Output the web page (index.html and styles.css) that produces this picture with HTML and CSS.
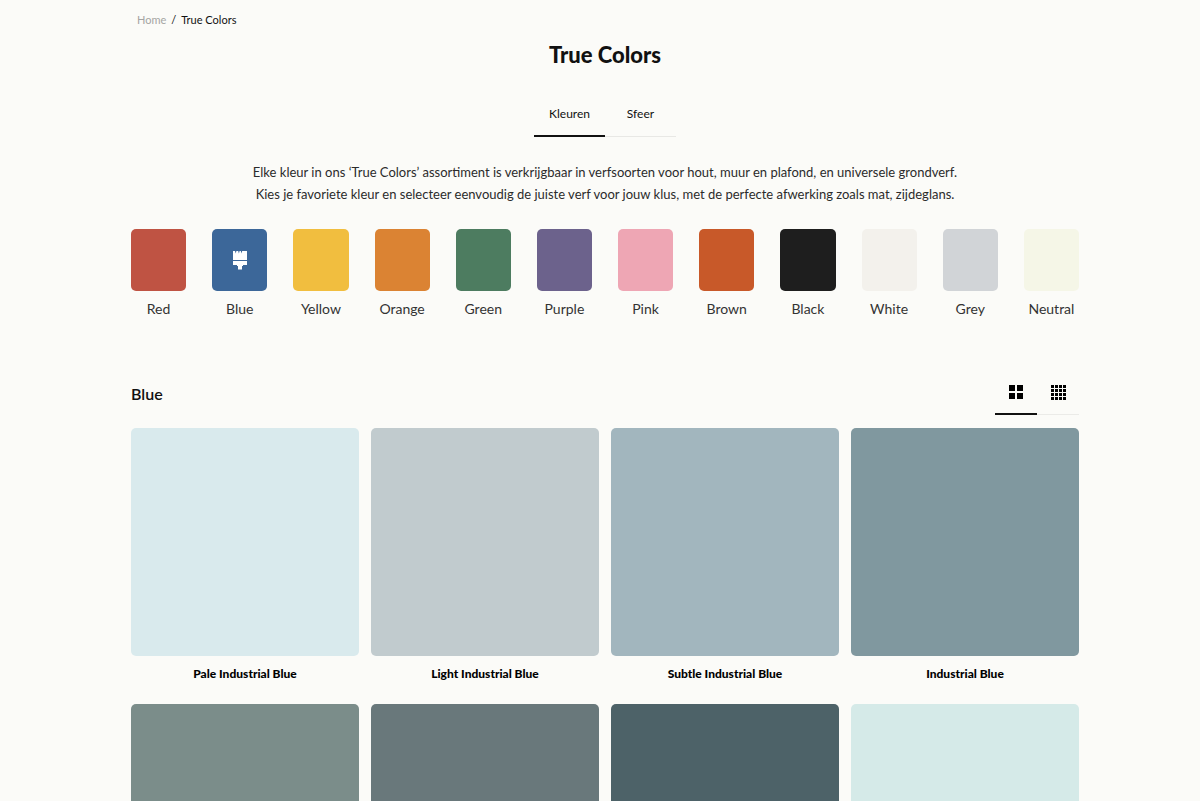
FILE: index.html
```
<!DOCTYPE html>
<html lang="nl">
  <head>
    <meta charset="UTF-8" />
    <meta name="viewport" content="width=device-width, initial-scale=1.0" />
    <title>True Colors</title>
    <link rel="stylesheet" href="styles.css">
  </head>
  <body>
    <div class="page">
      <nav class="breadcrumb">
        <a href="#">Home</a>
        <span>/</span>
        <a href="#" class="current">True Colors</a>
      </nav>

      <h1>True Colors</h1>

      <div class="tabs">
        <button type="button" class="tab active">Kleuren</button>
        <button type="button" class="tab">Sfeer</button>
      </div>

      <p class="intro">
        Elke kleur in ons ‘True Colors’ assortiment is verkrijgbaar in verfsoorten voor hout, muur en plafond, en universele grondverf.<br>
        Kies je favoriete kleur en selecteer eenvoudig de juiste verf voor jouw klus, met de perfecte afwerking zoals mat, zijdeglans.
      </p>

      <div class="swatches">
        <button type="button" class="swatch"><span class="chip red"></span>Red</button>
        <button type="button" class="swatch">
          <span class="chip blue">
            <svg width="16" height="20" viewBox="0 0 16 20" fill="#fff">
              <path d="M1 1h2l.7 2.500L4.400 1h1.800l.7 2.500L7.600 1h1.200l.7 2.500.7-2.500H15v9H1z" />
              <path d="M1 11h14v4h-4v1h-1v3.500H6V16H5v-1H1z" />
            </svg>
          </span>Blue
        </button>
        <button type="button" class="swatch"><span class="chip yellow"></span>Yellow</button>
        <button type="button" class="swatch"><span class="chip orange"></span>Orange</button>
        <button type="button" class="swatch"><span class="chip green"></span>Green</button>
        <button type="button" class="swatch"><span class="chip purple"></span>Purple</button>
        <button type="button" class="swatch"><span class="chip pink"></span>Pink</button>
        <button type="button" class="swatch"><span class="chip brown"></span>Brown</button>
        <button type="button" class="swatch"><span class="chip black"></span>Black</button>
        <button type="button" class="swatch"><span class="chip white"></span>White</button>
        <button type="button" class="swatch"><span class="chip grey"></span>Grey</button>
        <button type="button" class="swatch"><span class="chip neutral"></span>Neutral</button>
      </div>

      <div class="section-head">
        <h2>Blue</h2>
        <div class="view-toggle">
          <button type="button" class="view active">
            <svg width="14" height="14" viewBox="0 0 14 14">
              <path d="M0 0h6v6H0zM8 0h6v6H8zM0 8h6v6H0zM8 8h6v6H8z" />
            </svg>
          </button>
          <button type="button" class="view">
            <svg width="15" height="15" viewBox="0 0 15 15">
              <path d="M0 0h3v3H0zM4 0h3v3H4zM8 0h3v3H8zM12 0h3v3h-3zM0 4h3v3H0zM4 4h3v3H4zM8 4h3v3H8zM12 4h3v3h-3zM0 8h3v3H0zM4 8h3v3H4zM8 8h3v3H8zM12 8h3v3h-3zM0 12h3v3H0zM4 12h3v3H4zM8 12h3v3H8zM12 12h3v3h-3z" />
            </svg>
          </button>
        </div>
      </div>

      <div class="colors">
        <a href="#" class="color"><span class="tile pale-industrial"></span>Pale Industrial Blue</a>
        <a href="#" class="color"><span class="tile light-industrial"></span>Light Industrial Blue</a>
        <a href="#" class="color"><span class="tile subtle-industrial"></span>Subtle Industrial Blue</a>
        <a href="#" class="color"><span class="tile industrial"></span>Industrial Blue</a>
        <a href="#" class="color"><span class="tile sage"></span></a>
        <a href="#" class="color"><span class="tile slate"></span></a>
        <a href="#" class="color"><span class="tile petrol"></span></a>
        <a href="#" class="color"><span class="tile mint"></span></a>
      </div>
    </div>
  </body>
</html>
```
FILE: styles.css
```
* {
    box-sizing: border-box;
}

body {
    margin: 0;
    background-color: #fbfbf8;
    color: #111;
    font-family: "Futura PT", Futura, Lato, sans-serif;
}

button {
    padding: 0;
    border: 0;
    background: none;
    color: inherit;
    font-family: inherit;
    cursor: pointer;
}

a {
    color: inherit;
    text-decoration: none;
}

.page {
    padding: 12px 121px 24px 131px;
}

.breadcrumb {
    display: flex;
    gap: 5px;
    padding-left: 6px;
    font-size: 11px;
    line-height: 16px;
}

.breadcrumb a {
    color: #a5a5a3;
}

.breadcrumb .current {
    color: #111;
}

h1 {
    margin: 12px 0 36px;
    font-size: 22px;
    font-weight: 900;
    line-height: 30px;
    text-align: center;
}

/* Tabs */
.tabs {
    display: grid;
    grid-template-columns: 71px 71px;
    justify-content: center;
}

.tab {
    height: 31px;
    padding-bottom: 14px;
    border-bottom: 1px solid #e8e8e5;
    font-size: 12px;
    line-height: 16px;
}

.tab.active {
    border-bottom: 2px solid #111;
}

.intro {
    margin: 24px 0;
    color: #2b2b2b;
    font-size: 13px;
    line-height: 22px;
    text-align: center;
}

/* Colour families */
.swatches {
    display: grid;
    grid-template-columns: repeat(12, 1fr);
    gap: 26px;
}

.swatch {
    color: #333;
    font-size: 14px;
    line-height: 20px;
}

.chip {
    display: flex;
    align-items: center;
    justify-content: center;
    height: 62px;
    margin-bottom: 8px;
    border-radius: 5px;
}

.red { background-color: #bf5343; }
.blue { background-color: #3c6799; }
.yellow { background-color: #f1be3f; }
.orange { background-color: #db8333; }
.green { background-color: #4d7c60; }
.purple { background-color: #6c628c; }
.pink { background-color: #eea6b4; }
.brown { background-color: #c85929; }
.black { background-color: #1e1e1e; }
.white { background-color: #f3f1ec; }
.grey { background-color: #d1d4d7; }
.neutral { background-color: #f5f6e7; }

/* Heading with view switch */
.section-head {
    display: flex;
    justify-content: space-between;
    margin: 51px 0 13px;
}

h2 {
    margin: 12px 0 0;
    font-size: 16px;
    font-weight: 600;
    line-height: 24px;
}

.view-toggle {
    display: flex;
}

.view {
    display: flex;
    justify-content: center;
    width: 42px;
    height: 45px;
    padding-top: 15px;
    border-bottom: 1px solid #ebebe8;
}

.view.active {
    border-bottom: 2px solid #111;
}

/* Colour tiles */
.colors {
    display: grid;
    grid-template-columns: repeat(4, 1fr);
    gap: 20px 12px;
}

.color {
    color: #000;
    font-size: 12px;
    font-weight: 900;
    line-height: 20px;
    text-align: center;
}

.tile {
    display: block;
    aspect-ratio: 1;
    margin-bottom: 8px;
    border-radius: 5px;
}

.pale-industrial { background-color: #d9eaed; }
.light-industrial { background-color: #c1cbce; }
.subtle-industrial { background-color: #a2b6be; }
.industrial { background-color: #80989f; }
.sage { background-color: #7b8d8a; }
.slate { background-color: #69787b; }
.petrol { background-color: #4d6268; }
.mint { background-color: #d5eae8; }
```
